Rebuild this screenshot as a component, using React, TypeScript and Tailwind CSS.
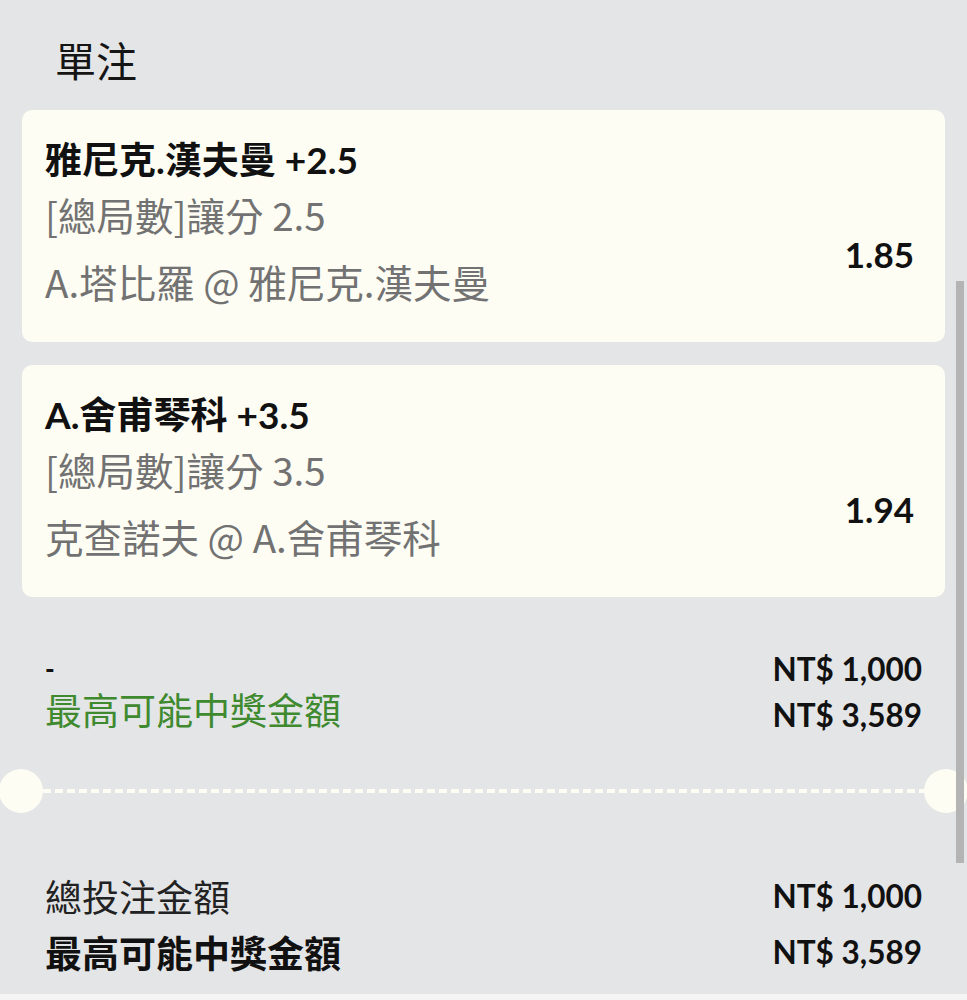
import React from "react";

type Bet = { title: string; market: string; match: string; odds: string };

const bets: Bet[] = [
  { title: "雅尼克.漢夫曼 +2.5", market: "[總局數]讓分 2.5", match: "A.塔比羅 @ 雅尼克.漢夫曼", odds: "1.85" },
  { title: "A.舍甫琴科 +3.5", market: "[總局數]讓分 3.5", match: "克查諾夫 @ A.舍甫琴科", odds: "1.94" },
];

function Card({ bet }: { bet: Bet }) {
  return (
    <div className="flex h-[232px] rounded-[10px] bg-[#fdfdf4] pl-[23px] pr-[31px] pt-[25px]">
      <div className="flex flex-1 flex-col">
        <div className="h-[50px] font-['Lato','Noto_Sans_CJK_TC',sans-serif] text-[37px] font-bold leading-[50px] text-[#111111]">
          {bet.title}
        </div>
        <div className="mt-[4px] h-[50px] text-[38.5px] leading-[50px] text-[#727272]">{bet.market}</div>
        <div className="mt-[17px] h-[50px] text-[38.5px] leading-[50px] text-[#727272]">{bet.match}</div>
      </div>
      <div className="mt-[94px] h-[50px] font-['Lato',sans-serif] text-[35px] font-bold leading-[50px] text-[#111111]">
        {bet.odds}
      </div>
    </div>
  );
}

const amount = "font-['Lato','Noto_Sans_CJK_TC',sans-serif] text-[31.5px] font-bold text-[#111111]";

export default function App() {
  return (
    <div className="relative h-[1000px] w-[967px] overflow-hidden bg-[#e4e5e7] font-['Noto_Sans_CJK_TC',sans-serif]">
      <div className="pl-[55px] pt-[35px] text-[41px] leading-[48px] text-[#151515]">單注</div>

      <div className="mx-[22px] mt-[27px] flex flex-col gap-[23px]">
        {bets.map((b) => (
          <Card key={b.odds} bet={b} />
        ))}
      </div>

      <div className="mx-[45px] mt-[49px] flex flex-col">
        <div className="flex h-[46px] items-center justify-between">
          <span className="font-['Lato',sans-serif] text-[26px] font-black leading-none text-[#111111]">-</span>
          <span className={`${amount} leading-[46px]`}>NT$ 1,000</span>
        </div>
        <div className="flex h-[46px] items-center justify-between">
          <span className="mb-[12px] text-[37px] leading-[46px] text-[#3f8a2f]">最高可能中獎金額</span>
          <span className={`${amount} leading-[46px]`}>NT$ 3,589</span>
        </div>
      </div>

      <div className="mt-[31px] flex h-[44px] items-center">
        <div className="ml-[-1px] h-[44px] w-[44px] shrink-0 rounded-full bg-[#fdfdf4]" />
        <div className="h-[4px] flex-1 bg-[repeating-linear-gradient(90deg,#fdfdf4_0px,#fdfdf4_8px,transparent_8px,transparent_12px)]" />
        <div className="mr-[-1px] h-[44px] w-[44px] shrink-0 rounded-full bg-[#fdfdf4]" />
      </div>

      <div className="mx-[45px] mt-[55px] flex flex-col">
        <div className="flex h-[56px] items-center justify-between">
          <span className="text-[37px] leading-[56px] text-[#222222]">總投注金額</span>
          <span className={`${amount} leading-[56px]`}>NT$ 1,000</span>
        </div>
        <div className="flex h-[56px] items-center justify-between">
          <span className="text-[37px] font-bold leading-[56px] text-[#111111]">最高可能中獎金額</span>
          <span className={`${amount} leading-[56px]`}>NT$ 3,589</span>
        </div>
      </div>

      <div className="mt-[14px] h-[7px] w-full bg-[#f4f4f4]" />

      <div className="absolute right-[3px] top-[281px] h-[582px] w-[8px] bg-[#b4b4b4]" />
    </div>
  );
}
